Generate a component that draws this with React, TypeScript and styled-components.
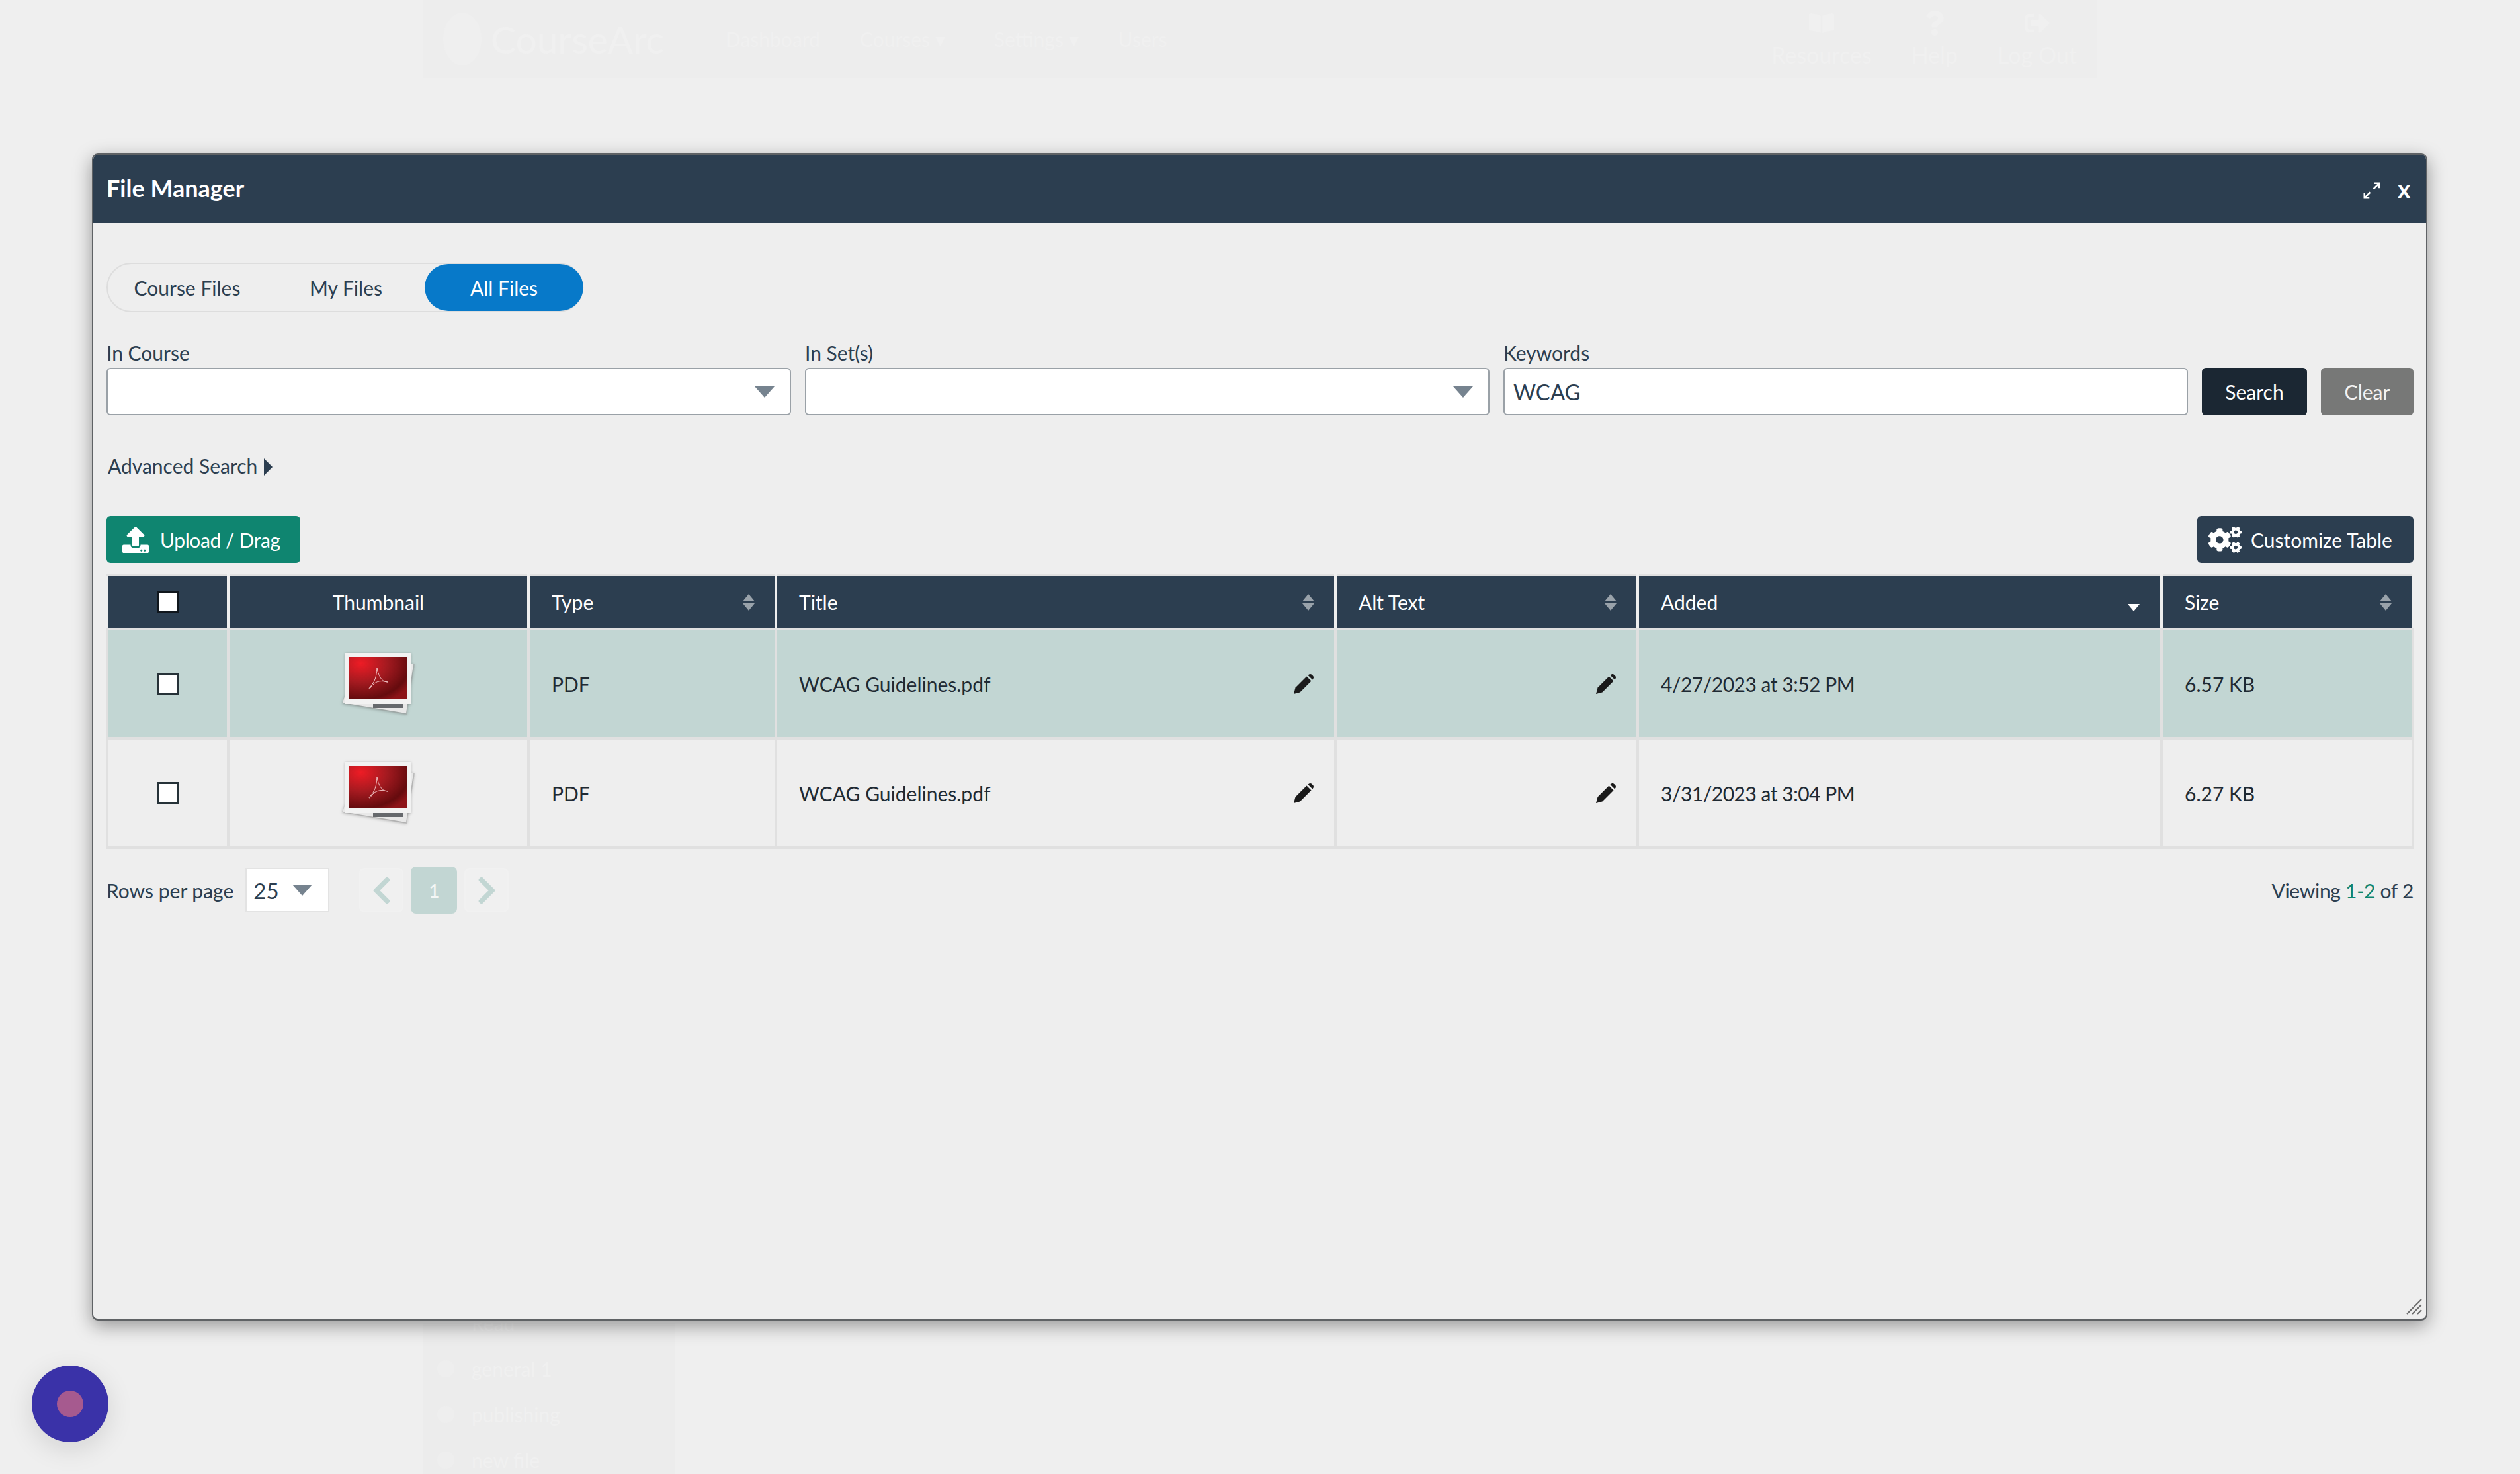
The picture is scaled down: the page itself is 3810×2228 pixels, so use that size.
import styled, { createGlobalStyle } from "styled-components";
import { FaCogs, FaUpload, FaChevronLeft, FaChevronRight, FaBookOpen, FaQuestion, FaSignOutAlt } from "react-icons/fa";

const GlobalStyle = createGlobalStyle`
  html, body {
    margin: 0;
    padding: 0;
    background: #efefef;
    overflow: hidden;
  }
  body {
    font-family: Lato, "Open Sans", sans-serif;
    color: #2c3e50;
  }
`;

const files = [
  { id: 1, title: "WCAG Guidelines.pdf", added: "4/27/2023 at 3:52 PM", size: "6.57 KB", selected: true },
  { id: 2, title: "WCAG Guidelines.pdf", added: "3/31/2023 at 3:04 PM", size: "6.27 KB", selected: false },
];

const columnWidths = [183, 454, 374, 846, 457, 792, 380];

const PdfThumb = () => (
  <ThumbSvg viewBox="0 0 110 93" preserveAspectRatio="none">
    <defs>
      <radialGradient id="pdfRed" cx="0.2" cy="0.15" r="1">
        <stop offset="0" stopColor="#ee1c25" />
        <stop offset="0.45" stopColor="#a51a20" />
        <stop offset="0.85" stopColor="#650b0e" />
        <stop offset="1" stopColor="#8d1318" />
      </radialGradient>
    </defs>
    <polygon points="0,76 98,93 110,17 100,15 6,60" fill="#9d9d9d" opacity="0.45" />
    <polygon points="1,75 97,91 108,17 100,14 6,60" fill="#e8e8e8" />
    <rect x="47" y="76" width="46" height="7" fill="#66696d" />
    <rect x="5" y="0" width="99" height="77" fill="#f2f2f2" />
    <rect x="11" y="6" width="87" height="64" fill="url(#pdfRed)" />
    <path
      d="M53 23 C52 36 50 44 42 52 C40 55 42 55 45 50 C49 45 56 40 69 44 C62 44 56 38 53 23"
      fill="none"
      stroke="#f3c9c9"
      strokeWidth="1"
    />
  </ThumbSvg>
);

const PencilIcon = () => (
  <PencilSvg viewBox="0 0 32 32">
    <path d="M1 31 L3.5 21.5 L20.5 4.5 L27.5 11.5 L10.5 28.5 Z" />
    <path d="M22.5 2.8 C24.6 .6 26.8 .6 28.4 2.1 L29.9 3.6 C31.5 5.2 31.5 7.4 29.3 9.6 Z" />
  </PencilSvg>
);

const SortIcon = () => (
  <SortStack>
    <SortUp />
    <SortDown />
  </SortStack>
);

const App = () => {
  return (
    <Page>
      <GlobalStyle />

      <GhostApp>
        <GhostNav>
          <GhostBrand>
            <GhostLogo />
            CourseArc
          </GhostBrand>
          <GhostLinks>
            <span>Dashboard</span>
            <GhostMenuLink>Courses ▾</GhostMenuLink>
            <span>Settings ▾</span>
            <span>Users</span>
          </GhostLinks>
          <GhostTools>
            <GhostTool>
              <FaBookOpen />
              Resources
            </GhostTool>
            <GhostTool>
              <FaQuestion />
              Help
            </GhostTool>
            <GhostTool>
              <FaSignOutAlt />
              Log Out
            </GhostTool>
          </GhostTools>
        </GhostNav>
        <GhostSidebar>
          <GhostItem>Read</GhostItem>
          <GhostItem>
            <GhostDot />
            general 1
          </GhostItem>
          <GhostItem>
            <GhostDot />
            publishing
          </GhostItem>
          <GhostItem>
            <GhostDot />
            new file
          </GhostItem>
        </GhostSidebar>
      </GhostApp>

      <Modal>
        <ModalHeader>
          <ModalTitle>File Manager</ModalTitle>
          <HeaderActions>
            <ExpandSvg viewBox="0 0 24 24">
              <path d="M3 21 L10 14 M14 10 L21 3 M15 3 H21 V9 M3 15 V21 H9" />
            </ExpandSvg>
            <CloseMark>x</CloseMark>
          </HeaderActions>
        </ModalHeader>

        <ModalBody>
          <Tabs>
            <Tab>Course Files</Tab>
            <Tab>My Files</Tab>
            <Tab $active>All Files</Tab>
          </Tabs>

          <FilterRow>
            <Field>
              <Label>In Course</Label>
              <SelectBox>
                <CaretDown />
              </SelectBox>
            </Field>
            <Field>
              <Label>In Set(s)</Label>
              <SelectBox>
                <CaretDown />
              </SelectBox>
            </Field>
            <Field>
              <Label>Keywords</Label>
              <KeywordInput defaultValue="WCAG" />
            </Field>
            <SearchButton>Search</SearchButton>
            <ClearButton>Clear</ClearButton>
          </FilterRow>

          <AdvancedSearch>
            Advanced Search <CaretRight />
          </AdvancedSearch>

          <Toolbar>
            <UploadButton>
              <FaUpload />
              Upload / Drag
            </UploadButton>
            <CustomizeButton>
              <FaCogs />
              Customize Table
            </CustomizeButton>
          </Toolbar>

          <Table>
            <colgroup>
              {columnWidths.map((width) => (
                <col key={width} style={{ width }} />
              ))}
            </colgroup>
            <thead>
              <tr>
                <Th $center>
                  <HeaderCheck type="checkbox" />
                </Th>
                <Th $center>Thumbnail</Th>
                <Th>
                  <ThInner>
                    Type <SortIcon />
                  </ThInner>
                </Th>
                <Th>
                  <ThInner>
                    Title <SortIcon />
                  </ThInner>
                </Th>
                <Th>
                  <ThInner>
                    Alt Text <SortIcon />
                  </ThInner>
                </Th>
                <Th>
                  <ThInner>
                    Added <SortedDown />
                  </ThInner>
                </Th>
                <Th>
                  <ThInner>
                    Size <SortIcon />
                  </ThInner>
                </Th>
              </tr>
            </thead>
            <tbody>
              {files.map((file) => (
                <Row key={file.id} $selected={file.selected}>
                  <Td $center>
                    <RowCheck type="checkbox" />
                  </Td>
                  <Td $center>
                    <PdfThumb />
                  </Td>
                  <Td>PDF</Td>
                  <Td>
                    <CellInner>
                      {file.title}
                      <PencilIcon />
                    </CellInner>
                  </Td>
                  <Td>
                    <CellInner>
                      <span />
                      <PencilIcon />
                    </CellInner>
                  </Td>
                  <DateTd>{file.added}</DateTd>
                  <Td>{file.size}</Td>
                </Row>
              ))}
            </tbody>
          </Table>

          <Pagination>
            <PagerLeft>
              <RowsLabel>Rows per page</RowsLabel>
              <RowsSelect>
                25
                <CaretDown />
              </RowsSelect>
              <PagerNav>
                <PageArrow>
                  <FaChevronLeft />
                </PageArrow>
                <PageCurrent>1</PageCurrent>
                <PageArrow>
                  <FaChevronRight />
                </PageArrow>
              </PagerNav>
            </PagerLeft>
            <Viewing>
              Viewing <ViewingRange>1-2</ViewingRange> of 2
            </Viewing>
          </Pagination>
        </ModalBody>

        <ResizeHandle viewBox="0 0 24 24">
          <path d="M1 23 L23 1 M9 23 L23 9 M17 23 L23 17" stroke="#6a6a6a" strokeWidth="2" fill="none" />
        </ResizeHandle>
      </Modal>

      <ChatBubble>
        <ChatDot />
      </ChatBubble>
    </Page>
  );
};

export default App;

const Page = styled.div`
  position: relative;
  width: 3810px;
  height: 2228px;
  overflow: hidden;
  background: #efefef;
`;

const GhostApp = styled.div`
  margin-left: 640px;
  width: 2530px;
  height: 2228px;
  display: flex;
  flex-direction: column;
  justify-content: space-between;
  color: #f0f0f0;
`;

const GhostNav = styled.div`
  height: 118px;
  flex-shrink: 0;
  background: #ededed;
  display: flex;
  align-items: center;
  padding: 0 30px;
  box-sizing: border-box;
  font-size: 30px;
`;

const GhostBrand = styled.div`
  display: flex;
  align-items: center;
  gap: 14px;
  font-size: 57px;
  width: 427px;
`;

const GhostLogo = styled.div`
  width: 58px;
  height: 80px;
  border-radius: 50%;
  background: #efefef;
`;

const GhostLinks = styled.div`
  display: flex;
  gap: 60px;
  flex: 1;
`;

const GhostMenuLink = styled.span`
  margin-right: 14px;
`;

const GhostTools = styled.div`
  display: flex;
  gap: 60px;
`;

const GhostTool = styled.div`
  display: flex;
  flex-direction: column;
  align-items: center;
  gap: 8px;
  font-size: 34px;
  svg {
    font-size: 38px;
  }
`;

const GhostSidebar = styled.div`
  width: 380px;
  height: 228px;
  background: #ececec;
  display: flex;
  flex-direction: column;
  justify-content: flex-end;
  gap: 39px;
  padding: 0 0 6px 21px;
  box-sizing: border-box;
  font-size: 30px;
`;

const GhostItem = styled.div`
  display: flex;
  align-items: center;
  line-height: 30px;
  padding-left: 52px;
  position: relative;
`;

const GhostDot = styled.span`
  position: absolute;
  left: 0;
  width: 26px;
  height: 26px;
  border-radius: 50%;
  background: #eeeeee;
`;

const Modal = styled.div`
  position: absolute;
  left: 139px;
  top: 232px;
  width: 3531px;
  height: 1764px;
  box-sizing: border-box;
  display: flex;
  flex-direction: column;
  background: #eeeeee;
  border: 2px solid #5f6265;
  border-bottom-width: 3px;
  border-radius: 9px;
  box-shadow: 0 8px 28px rgba(0, 0, 0, 0.38);
  overflow: hidden;
`;

const ModalHeader = styled.div`
  height: 103px;
  flex-shrink: 0;
  background: #2c3e50;
  display: flex;
  align-items: center;
  justify-content: space-between;
  padding: 0 24px 0 20px;
  color: #ffffff;
`;

const ModalTitle = styled.div`
  font-size: 36px;
  font-weight: 700;
  margin-top: -4px;
`;

const HeaderActions = styled.div`
  display: flex;
  align-items: center;
  gap: 24px;
  margin-top: 4px;
`;

const ExpandSvg = styled.svg`
  width: 30px;
  height: 30px;
  fill: none;
  stroke: #ffffff;
  stroke-width: 2;
`;

const CloseMark = styled.span`
  font-size: 36px;
  font-weight: 700;
  line-height: 30px;
  margin-top: -6px;
`;

const ModalBody = styled.div`
  flex: 1;
  padding: 60px 19px 0 20px;
  display: flex;
  flex-direction: column;
`;

const Tabs = styled.div`
  display: flex;
  width: 721px;
  height: 75px;
  box-sizing: border-box;
  border: 2px solid #dddddd;
  border-radius: 38px;
`;

const Tab = styled.div<{ $active?: boolean }>`
  width: 240px;
  flex-shrink: 0;
  margin-left: ${(p) => (p.$active ? "-1px" : "0")};
  display: flex;
  align-items: center;
  justify-content: center;
  font-size: 30px;
  border-radius: 36px;
  background: ${(p) => (p.$active ? "#0779c9" : "transparent")};
  color: ${(p) => (p.$active ? "#ffffff" : "#2c3e50")};
`;

const FilterRow = styled.div`
  display: flex;
  align-items: flex-end;
  gap: 21px;
  margin-top: 43px;
`;

const Field = styled.div`
  flex: 1;
  display: flex;
  flex-direction: column;
`;

const Label = styled.label`
  font-size: 30px;
  line-height: 36px;
  padding-bottom: 5px;
`;

const SelectBox = styled.div`
  position: relative;
  height: 72px;
  box-sizing: border-box;
  background: #ffffff;
  border: 2px solid #9aa1a7;
  border-radius: 6px;
  display: flex;
  align-items: center;
  justify-content: flex-end;
  padding-right: 23px;
`;

const KeywordInput = styled.input`
  height: 72px;
  box-sizing: border-box;
  width: 100%;
  background: #ffffff;
  border: 2px solid #9aa1a7;
  border-radius: 6px;
  padding: 0 13px;
  font-family: Lato, sans-serif;
  font-size: 33px;
  color: #2c3e50;
  outline: none;
`;

const CaretDown = styled.span`
  width: 0;
  height: 0;
  border-left: 15px solid transparent;
  border-right: 15px solid transparent;
  border-top: 17px solid #76838f;
`;

const CaretRight = styled.span`
  display: inline-block;
  width: 0;
  height: 0;
  border-top: 13px solid transparent;
  border-bottom: 13px solid transparent;
  border-left: 13px solid #2c3e50;
  margin-left: 2px;
  vertical-align: -3px;
`;

const SearchButton = styled.button`
  width: 159px;
  height: 72px;
  border: none;
  border-radius: 6px;
  background: #1b2733;
  color: #ffffff;
  font-family: Lato, sans-serif;
  font-size: 30px;
`;

const ClearButton = styled(SearchButton)`
  width: 140px;
  background: #777877;
  color: #f3f3f3;
`;

const AdvancedSearch = styled.div`
  margin-top: 58px;
  margin-left: 2px;
  font-size: 30px;
  line-height: 36px;
`;

const Toolbar = styled.div`
  display: flex;
  justify-content: space-between;
  margin-top: 58px;
`;

const UploadButton = styled.button`
  height: 71px;
  width: 293px;
  border: none;
  border-radius: 6px;
  background: #0f8570;
  color: #ffffff;
  font-family: Lato, sans-serif;
  font-size: 30px;
  letter-spacing: -0.4px;
  display: flex;
  align-items: center;
  padding: 0 0 0 24px;
  gap: 17px;
  svg {
    font-size: 40px;
  }
`;

const CustomizeButton = styled(UploadButton)`
  width: 327px;
  background: #2c3e50;
  padding-left: 17px;
  gap: 14px;
  letter-spacing: 0;
  svg {
    font-size: 50px;
  }
`;

const Table = styled.table`
  margin: 16px 0 0 -1px;
  width: 3486px;
  table-layout: fixed;
  border-collapse: collapse;
  border: 4px solid #e0e0e0;
`;

const Th = styled.th<{ $center?: boolean }>`
  height: 82px;
  padding: 0 33px;
  box-sizing: border-box;
  background: #2c3e50;
  color: #ffffff;
  font-size: 30px;
  font-weight: 400;
  text-align: ${(p) => (p.$center ? "center" : "left")};
  border-left: 4px solid #eeeeee;
  border-right: 4px solid #eeeeee;
  border-top: 4px solid #e0e0e0;
  border-bottom: 4px solid #e0e0e0;
`;

const ThInner = styled.div`
  display: flex;
  align-items: center;
  justify-content: space-between;
  margin-right: -2px;
`;

const SortStack = styled.span`
  display: flex;
  flex-direction: column;
  gap: 3px;
  margin-right: -1px;
`;

const SortUp = styled.span`
  width: 0;
  height: 0;
  border-left: 9px solid transparent;
  border-right: 9px solid transparent;
  border-bottom: 11px solid #99a2aa;
`;

const SortDown = styled.span`
  width: 0;
  height: 0;
  border-left: 9px solid transparent;
  border-right: 9px solid transparent;
  border-top: 11px solid #99a2aa;
`;

const SortedDown = styled.span`
  width: 0;
  height: 0;
  margin-top: 16px;
  border-left: 9px solid transparent;
  border-right: 9px solid transparent;
  border-top: 11px solid #ffffff;
`;

const Row = styled.tr<{ $selected: boolean }>`
  height: 165px;
  background: ${(p) => (p.$selected ? "#c2d6d3" : "transparent")};
`;

const Td = styled.td<{ $center?: boolean }>`
  padding: 0 33px;
  box-sizing: border-box;
  font-size: 30px;
  color: #1f2a33;
  text-align: ${(p) => (p.$center ? "center" : "left")};
  border: 4px solid #e0e0e0;
`;

const DateTd = styled(Td)`
  letter-spacing: -0.5px;
`;

const CellInner = styled.div`
  display: flex;
  align-items: center;
  justify-content: space-between;
`;

const PencilSvg = styled.svg`
  width: 32px;
  height: 32px;
  margin-right: -3px;
  fill: #1a1a1a;
  flex-shrink: 0;
`;

const ThumbSvg = styled.svg`
  display: block;
  margin: 0 auto;
  width: 110px;
  height: 93px;
  filter: drop-shadow(0 1px 2px rgba(0, 0, 0, 0.3));
`;

const RowCheck = styled.input`
  appearance: none;
  display: block;
  margin: 0 auto;
  width: 33px;
  height: 33px;
  box-sizing: border-box;
  background: #ffffff;
  border: 3px solid #263238;
  border-radius: 0;
`;

const HeaderCheck = styled(RowCheck)`
  border-color: #10161c;
`;

const Pagination = styled.div`
  display: flex;
  align-items: center;
  justify-content: space-between;
  margin-top: 27px;
`;

const PagerLeft = styled.div`
  display: flex;
  align-items: center;
`;

const RowsLabel = styled.span`
  font-size: 30px;
`;

const RowsSelect = styled.div`
  margin-left: 18px;
  width: 127px;
  height: 67px;
  box-sizing: border-box;
  background: #ffffff;
  border: 2px solid #e3e3e3;
  display: flex;
  align-items: center;
  justify-content: space-between;
  padding: 0 24px 0 10px;
  font-size: 33px;
`;

const PagerNav = styled.div`
  margin-left: 45px;
  display: flex;
  align-items: center;
  gap: 11px;
`;

const PageArrow = styled.div`
  width: 67px;
  height: 67px;
  box-sizing: border-box;
  background: #f0f0f0;
  border: 2px solid #f1f1f1;
  border-radius: 8px;
  display: flex;
  align-items: center;
  justify-content: center;
  color: #c2d6d3;
  font-size: 48px;
`;

const PageCurrent = styled.div`
  width: 70px;
  height: 71px;
  border-radius: 8px;
  background: #c2d6d3;
  color: #f4f7f6;
  display: flex;
  align-items: center;
  justify-content: center;
  font-size: 28px;
`;

const Viewing = styled.div`
  font-size: 30px;
  letter-spacing: -0.3px;
`;

const ViewingRange = styled.span`
  color: #0f8570;
`;

const ResizeHandle = styled.svg`
  position: absolute;
  right: 6px;
  bottom: 6px;
  width: 24px;
  height: 24px;
`;

const ChatBubble = styled.div`
  position: absolute;
  left: 48px;
  top: 2064px;
  width: 116px;
  height: 116px;
  border-radius: 50%;
  background: #3a32a8;
  box-shadow: 0 10px 40px rgba(0, 0, 0, 0.12);
  display: flex;
  align-items: center;
  justify-content: center;
`;

const ChatDot = styled.div`
  width: 40px;
  height: 40px;
  border-radius: 50%;
  background: #a65a8f;
`;
